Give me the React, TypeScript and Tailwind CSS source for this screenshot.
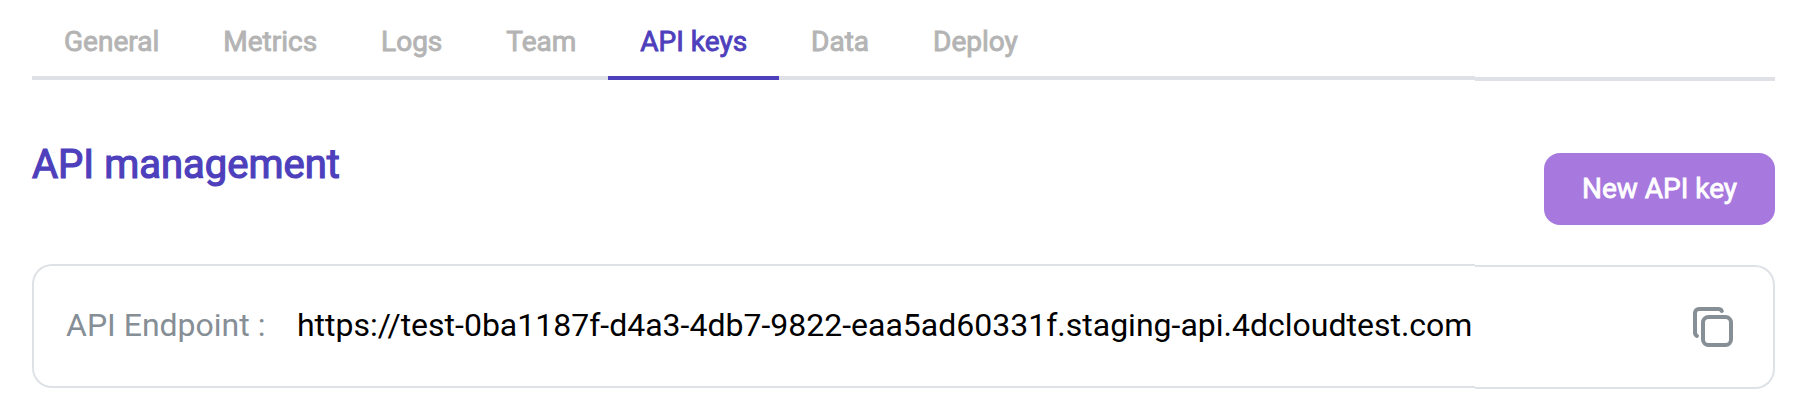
const tabs = ["General", "Metrics", "Logs", "Team", "API keys", "Data", "Deploy"];

function CopyIcon() {
  return (
    <svg width="40" height="40" viewBox="0 0 40 40" fill="none" stroke="#868e96" strokeWidth="4" strokeLinecap="round" strokeLinejoin="round">
      <rect x="10" y="10" width="28" height="28" rx="5.5" />
      <path d="M28.8 4C28.2 2.7 27 2 25.5 2H6a4 4 0 0 0-4 4v19.5C2 27 2.7 28.2 4 28.9" />
    </svg>
  );
}

export default function App() {
  return (
    <main className="h-[410px] bg-white pr-9 pl-8 font-['Roboto',sans-serif]">
      <div className="flex h-20">
        <nav className="flex h-20 w-[1443px] border-b-4 border-[#dfe1e7]">
          {tabs.map((t) => (
            <a
              key={t}
              className={
                t === "API keys"
                  ? "h-20 border-b-4 border-[#4e3fbc] px-8 pt-[21px] text-[28px] leading-[42px] text-[#4e3fbc] [-webkit-text-stroke:0.9px]"
                  : "px-8 pt-[21px] text-[28px] leading-[42px] text-[#b4b4b4] [-webkit-text-stroke:0.9px]"
              }
            >
              {t}
            </a>
          ))}
        </nav>
        <div className="mt-px h-20 flex-1 border-b-4 border-[#dfe1e7]" />
      </div>
      <header className="flex h-[184px] justify-between">
        <h1 className="pt-[59px] text-[40px] leading-[52px] text-[#4e3fbc] [-webkit-text-stroke:1.2px]">API management</h1>
        <button className="mt-[73px] h-[72px] w-[231px] rounded-2xl bg-[#a779df] text-[28px] text-white [-webkit-text-stroke:0.8px]">
          New API key
        </button>
      </header>
      <section className="flex text-[32px]">
        <div className="flex h-[124px] w-[1443px] items-center whitespace-nowrap rounded-l-[20px] border-2 border-r-0 border-[#dee2e6] pb-0.5 pl-8">
          <span className="text-[#868e96]">API Endpoint :</span>
          <span className="ml-[31.5px] text-black">https://test-0ba1187f-d4a3-4db7-9822-eaa5ad60331f.staging-api.4dcloudtest.com</span>
        </div>
        <div className="mt-px flex h-[124px] flex-1 items-center justify-end rounded-r-[20px] border-2 border-l-0 border-[#dee2e6] pr-10">
          <CopyIcon />
        </div>
      </section>
    </main>
  );
}
